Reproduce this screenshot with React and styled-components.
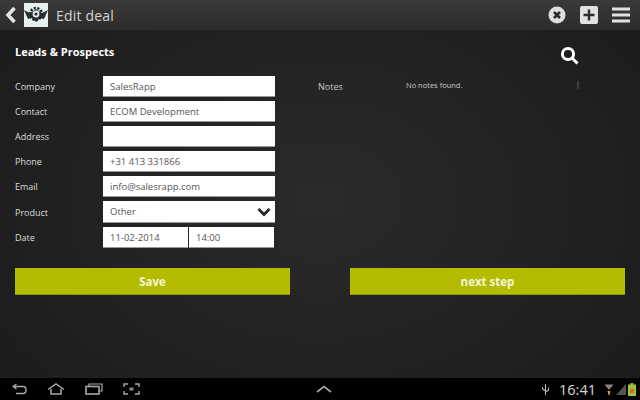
import styled, { createGlobalStyle } from 'styled-components'
import { Fragment } from 'react'

const GlobalStyle = createGlobalStyle`
    html, body {
        margin: 0;
        padding: 0;
        background: #1c1c1c;
    }
    * {
        box-sizing: border-box;
    }
`

const Tela = styled.div`
    width: 640px;
    height: 400px;
    display: flex;
    flex-direction: column;
    overflow: hidden;
    font-family: "Open Sans", "Noto Sans", sans-serif;
    color: #fff;
`

const BarraTopo = styled.header`
    height: 30px;
    display: flex;
    align-items: center;
    padding: 0 10px 0 5px;
    background: linear-gradient(#3a3a3a, #2c2c2c);
`

const Voltar = styled.svg`
    width: 12px;
    height: 18px;
    margin-right: 7px;
`

const Logo = styled.svg`
    width: 24px;
    height: 24px;
    margin-right: 8px;
`

const TituloTopo = styled.h1`
    margin: 0;
    flex: 1;
    font-size: 14px;
    font-weight: 400;
    letter-spacing: 0.2px;
    color: #d4d4d4;
`

const AcoesTopo = styled.div`
    display: flex;
    align-items: center;
    gap: 14px;
`

const Conteudo = styled.main`
    flex: 1;
    display: flex;
    flex-direction: column;
    padding: 14px 15px 0;
    background: radial-gradient(ellipse 420px 300px at 320px 170px, #2a2a2a, #1b1b1b);
`

const Cabecalho = styled.div`
    height: 32px;
    display: flex;
    justify-content: space-between;
`

const Secao = styled.h2`
    margin: 0;
    font-size: 11px;
    line-height: 16px;
    font-weight: 700;
`

const Lupa = styled.svg`
    width: 19px;
    height: 19px;
    margin: 2px 46px 0 0;
`

const Colunas = styled.div`
    display: flex;
`

const Formulario = styled.div`
    width: 260px;
    display: grid;
    grid-template-columns: 88px 172px;
    grid-template-rows: repeat(5, 21px) 22px 21px;
    row-gap: 4px;
    align-items: center;
`

const Rotulo = styled.label`
    font-size: 9px;
    color: #dcdcdc;
`

const Campo = styled.div`
    height: 21px;
    display: flex;
    align-items: center;
    justify-content: space-between;
    padding: 0 4px 0 7px;
    background: #fff;
    font-size: 9.5px;
    color: #555;
    border-bottom: 1px solid #999;
`

const CampoSelecao = styled(Campo)`
    height: 22px;
`

const Data = styled.div`
    display: grid;
    grid-template-columns: 85px 85px;
    gap: 1px;
`

const Notas = styled.div`
    display: flex;
    margin-left: 43px;
    flex: 1;
    height: 21px;
`

const RotuloNotas = styled.span`
    width: 88px;
    font-size: 9px;
    line-height: 21px;
    color: #c8c8c8;
`

const SemNotas = styled.span`
    width: 171px;
    font-size: 7.5px;
    line-height: 18px;
    color: #c8c8c8;
`

const Marca = styled.span`
    width: 2px;
    height: 8px;
    margin-top: 5px;
    background: #3c3c3c;
`

const Botoes = styled.div`
    display: flex;
    justify-content: space-between;
    margin-top: 20px;
`

const Botao = styled.button`
    width: 275px;
    height: 27px;
    border: 0;
    border-bottom: 1px solid #8f9600;
    padding: 0;
    background: #b4bc00;
    color: #f4f4dc;
    font-family: inherit;
    font-size: 11.5px;
    font-weight: 700;
`

const BarraSistema = styled.footer`
    height: 23px;
    display: grid;
    grid-template-columns: 1fr auto 1fr;
    align-items: center;
    padding: 0 4px 0 12px;
    background: #000;
    border-top: 1px solid #16242a;
`

const Navegacao = styled.div`
    display: flex;
    align-items: center;
    gap: 20px;
`

const Estado = styled.div`
    display: flex;
    align-items: center;
    justify-content: flex-end;
    gap: 2px;
`

const Hora = styled.span`
    font-size: 14.5px;
    margin: 0 6px 0 7px;
    color: #d8d8d8;
`

const campos = [
    { rotulo: 'Company', valor: 'SalesRapp' },
    { rotulo: 'Contact', valor: 'ECOM Development' },
    { rotulo: 'Address', valor: '' },
    { rotulo: 'Phone', valor: '+31 413 331866' },
    { rotulo: 'Email', valor: 'info@salesrapp.com' },
]

const App = () => (
    <Tela>
        <GlobalStyle />
        <BarraTopo>
            <Voltar viewBox="0 0 12 18">
                <path d="M9.5 2 L3 9 L9.5 16" fill="none" stroke="#e4e4e4" strokeWidth="3.6" />
            </Voltar>
            <Logo viewBox="0 0 24 24">
                <rect width="24" height="24" fill="#e6f0ec" />
                <path d="M0 7 L6 10 L12 6 L18 10 L24 7 L20 16 L16 15 L12 19 L8 15 L4 16 Z" fill="#2a3236" />
                <circle cx="12" cy="11" r="6" fill="none" stroke="#20282c" strokeWidth="2.4" strokeDasharray="2.2 1.4" />
                <circle cx="12" cy="11" r="3.4" fill="#e6f0ec" />
                <circle cx="12" cy="11" r="1.6" fill="#20282c" />
            </Logo>
            <TituloTopo>Edit deal</TituloTopo>
            <AcoesTopo>
                <svg width="18" height="18" viewBox="0 0 18 18">
                    <circle cx="9" cy="9" r="8.5" fill="#dedede" />
                    <path d="M6 6 L12 12 M12 6 L6 12" stroke="#2c2c2c" strokeWidth="2.6" />
                </svg>
                <svg width="18" height="18" viewBox="0 0 18 18">
                    <rect width="18" height="18" rx="2" fill="#e2e2e2" />
                    <path d="M9 3.5 V14.5 M3.5 9 H14.5" stroke="#2c2c2c" strokeWidth="2.4" />
                </svg>
                <svg width="18" height="16" viewBox="0 0 18 16">
                    <path d="M0 2 H18 M0 8 H18 M0 14 H18" stroke="#e2e2e2" strokeWidth="3" />
                </svg>
            </AcoesTopo>
        </BarraTopo>
        <Conteudo>
            <Cabecalho>
                <Secao>Leads &amp; Prospects</Secao>
                <Lupa viewBox="0 0 19 19">
                    <circle cx="8" cy="8" r="5.6" fill="none" stroke="#fff" strokeWidth="3" />
                    <path d="M12 12 L17.5 17.5" stroke="#fff" strokeWidth="3" />
                </Lupa>
            </Cabecalho>
            <Colunas>
                <Formulario>
                    {campos.map(campo => (
                        <Fragment key={campo.rotulo}>
                            <Rotulo>{campo.rotulo}</Rotulo>
                            <Campo>{campo.valor}</Campo>
                        </Fragment>
                    ))}
                    <Rotulo>Product</Rotulo>
                    <CampoSelecao>
                        Other
                        <svg width="14" height="10" viewBox="0 0 14 10">
                            <path d="M1.5 2 L7 7.5 L12.5 2" fill="none" stroke="#222" strokeWidth="2.8" />
                        </svg>
                    </CampoSelecao>
                    <Rotulo>Date</Rotulo>
                    <Data>
                        <Campo>11-02-2014</Campo>
                        <Campo>14:00</Campo>
                    </Data>
                </Formulario>
                <Notas>
                    <RotuloNotas>Notes</RotuloNotas>
                    <SemNotas>No notes found.</SemNotas>
                    <Marca />
                </Notas>
            </Colunas>
            <Botoes>
                <Botao>Save</Botao>
                <Botao>next step</Botao>
            </Botoes>
        </Conteudo>
        <BarraSistema>
            <Navegacao>
                <svg width="15" height="12" viewBox="0 0 15 12">
                    <path d="M4.5 1 L1.2 3.5 L4.5 6 M2 3.5 H11 Q14 3.5 14 7 Q14 10.5 11 10.5 H4" fill="none" stroke="#a8a8a8" strokeWidth="1.4" />
                </svg>
                <svg width="18" height="12" viewBox="0 0 18 12">
                    <path d="M1 6.5 L9 1 L17 6.5 M4 6 V11 H14 V6" fill="none" stroke="#a8a8a8" strokeWidth="1.5" />
                </svg>
                <svg width="18" height="12" viewBox="0 0 18 12">
                    <path d="M4 3 V1 H17 V8 H14.5" fill="none" stroke="#a8a8a8" strokeWidth="1.2" />
                    <rect x="1" y="3.5" width="13" height="7.5" fill="none" stroke="#a8a8a8" strokeWidth="1.6" />
                </svg>
                <svg width="17" height="12" viewBox="0 0 17 12">
                    <path d="M1 4 V1 H5 M12 1 H16 V4 M16 8 V11 H12 M5 11 H1 V8" fill="none" stroke="#a8a8a8" strokeWidth="1.4" />
                    <rect x="6.5" y="4.5" width="4" height="3" fill="#8a8a8a" />
                </svg>
            </Navegacao>
            <svg width="16" height="8" viewBox="0 0 16 8">
                <path d="M1 7 L8 1.5 L15 7" fill="none" stroke="#a8a8a8" strokeWidth="1.6" />
            </svg>
            <Estado>
                <svg width="9" height="13" viewBox="0 0 9 13">
                    <path d="M4.5 1 V12 M4.5 8 L1.5 6 V4 M4.5 9 L7.5 7 V4.5" fill="none" stroke="#bbb" strokeWidth="1.1" />
                </svg>
                <Hora>16:41</Hora>
                <svg width="10" height="13" viewBox="0 0 10 13">
                    <path d="M0.5 1.5 H9.5 L5 7 Z" fill="#888" />
                    <path d="M3.5 8 H6.5 L5.5 12 H4.5 Z" fill="#d8a040" />
                </svg>
                <svg width="10" height="11" viewBox="0 0 10 11">
                    <path d="M0 11 L10 0 V11 Z" fill="#555" />
                </svg>
                <svg width="8" height="13" viewBox="0 0 8 13">
                    <rect x="2.5" y="0" width="3" height="2" fill="#9aa83a" />
                    <rect y="1.5" width="8" height="11.5" fill="#9cc43a" />
                    <rect y="6" x="2" width="4" height="4" fill="#d8653a" />
                </svg>
            </Estado>
        </BarraSistema>
    </Tela>
)

export default App
